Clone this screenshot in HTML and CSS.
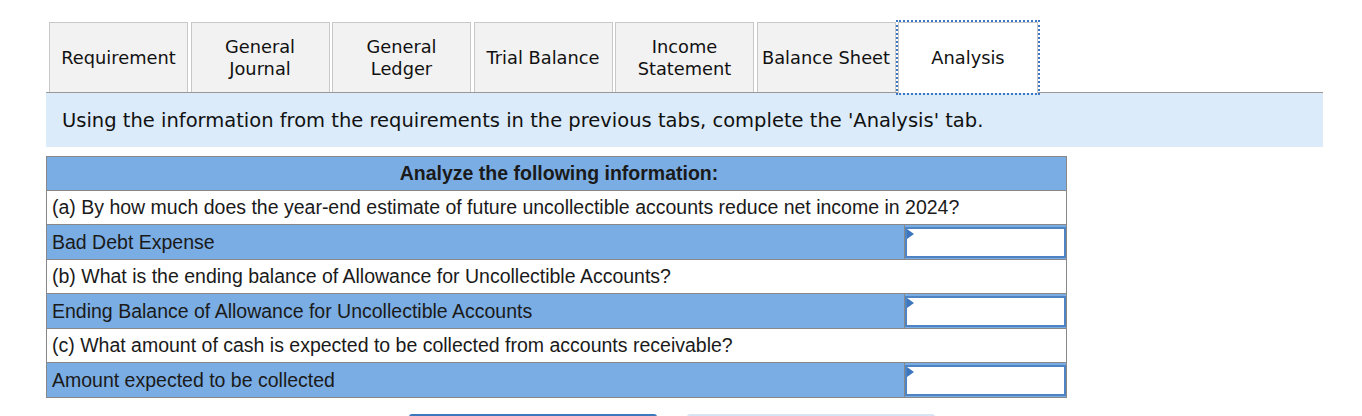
FILE: index.html
```html
<!DOCTYPE html>
<html lang="en">
<head>
    <meta charset="UTF-8">
    <title>Analysis</title>
    <link rel="stylesheet" href="styles.css">
</head>
<body>
    <div class="wrap">
        <div class="tabs">
            <div class="tab">Requirement</div>
            <div class="tab">General<br>Journal</div>
            <div class="tab">General<br>Ledger</div>
            <div class="tab">Trial Balance</div>
            <div class="tab">Income<br>Statement</div>
            <div class="tab">Balance Sheet</div>
            <div class="tab active">Analysis</div>
        </div>
        <div class="info">Using the information from the requirements in the previous tabs, complete the 'Analysis' tab.</div>

        <table class="analysis">
            <tr class="head">
                <th colspan="2">Analyze the following information:</th>
            </tr>
            <tr>
                <td colspan="2">(a) By how much does the year-end estimate of future uncollectible accounts reduce net income in 2024?</td>
            </tr>
            <tr class="entry">
                <td>Bad Debt Expense</td>
                <td class="cell"><div class="input"></div></td>
            </tr>
            <tr>
                <td colspan="2">(b) What is the ending balance of Allowance for Uncollectible Accounts?</td>
            </tr>
            <tr class="entry">
                <td>Ending Balance of Allowance for Uncollectible Accounts</td>
                <td class="cell"><div class="input"></div></td>
            </tr>
            <tr>
                <td colspan="2">(c) What amount of cash is expected to be collected from accounts receivable?</td>
            </tr>
            <tr class="entry">
                <td>Amount expected to be collected</td>
                <td class="cell"><div class="input"></div></td>
            </tr>
        </table>

        <div class="actions">
            <button class="btn prev"></button>
            <button class="btn next"></button>
        </div>
    </div>
</body>
</html>
```

FILE: styles.css
```css
body {
    margin: 0;
    padding: 0;
    background: #ffffff;
    color: #222222;
}

.wrap {
    width: 1277px;
    padding: 22px 0 0 46px;
}

.tabs {
    display: flex;
    gap: 2.5px;
    padding-left: 3px;
    border-bottom: 1px solid #999999;
}

.tab {
    width: 139px;
    height: 70px;
    box-sizing: border-box;
    display: flex;
    align-items: center;
    justify-content: center;
    text-align: center;
    background-color: #f2f2f2;
    border: 1px solid #c8c8c8;
    border-bottom: none;
    font-family: 'DejaVu Sans', Verdana, sans-serif;
    font-size: 17.8px;
    line-height: 22px;
    color: #111111;
}

.tab.active {
    width: 140px;
    height: 71px;
    margin-bottom: -1px;
    background-color: #ffffff;
    outline: 2px dotted #3a78c3;
}

.info {
    height: 54px;
    display: flex;
    align-items: center;
    padding-left: 16px;
    background-color: #dbebf9;
    font-family: 'DejaVu Sans', Verdana, sans-serif;
    font-size: 19.5px;
    color: #111111;
}

.analysis {
    margin-top: 9px;
    width: 1021px;
    border-collapse: collapse;
    border: 1px solid #888888;
    font-family: 'Liberation Sans', Arial, sans-serif;
    font-size: 19.5px;
    color: #1a1a1a;
}

.analysis th,
.analysis td {
    height: 33px;
    padding: 0 0 0 5px;
    border-top: 1px solid #888888;
    text-align: left;
    vertical-align: middle;
}

.analysis .head th {
    background-color: #7aade3;
    text-align: center;
    font-weight: 700;
}

.analysis .entry td {
    background-color: #7aade3;
}

.analysis td.cell {
    width: 161px;
    padding: 1px 0 0 0;
    border-left: 1px solid #888888;
    background-color: #7aade3;
}

.input {
    position: relative;
    height: 31px;
    box-sizing: border-box;
    background-color: #ffffff;
    border: 2px solid #4f84c4;
}

.input::before {
    content: '';
    position: absolute;
    top: 0;
    left: 0;
    border-left: 7px solid #3d76bd;
    border-top: 5px solid transparent;
    border-bottom: 5px solid transparent;
}

.actions {
    display: flex;
    gap: 30px;
    margin: 16px 0 0 363px;
}

.btn {
    width: 248px;
    height: 40px;
    border: none;
    border-radius: 3px;
}

.btn.prev {
    background-color: #3d78bd;
}

.btn.next {
    background-color: #d6e4f3;
}
```
